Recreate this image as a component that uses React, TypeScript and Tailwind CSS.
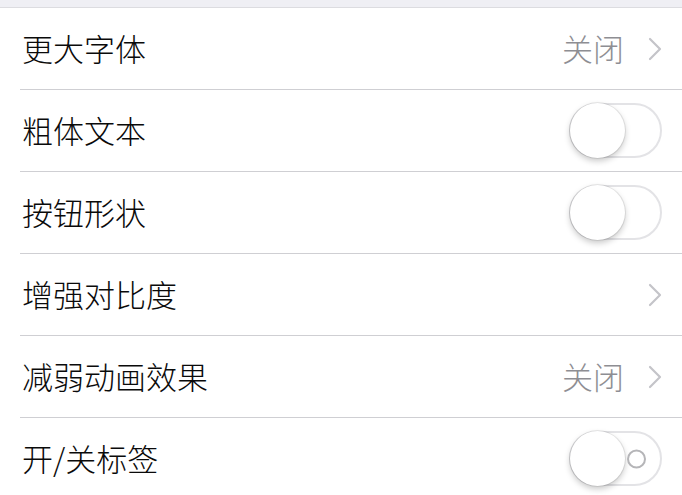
import type { ReactNode } from "react";

type Row = {
  label: string;
  kind: "link" | "toggle";
  value?: string;
  labels?: boolean;
};

const rows: Row[] = [
  { label: "更大字体", kind: "link", value: "关闭" },
  { label: "粗体文本", kind: "toggle" },
  { label: "按钮形状", kind: "toggle" },
  { label: "增强对比度", kind: "link" },
  { label: "减弱动画效果", kind: "link", value: "关闭" },
  { label: "开/关标签", kind: "toggle", labels: true },
];

function Chevron() {
  return (
    <svg viewBox="0 0 14 24" className="h-[24px] w-[14px]" fill="none" stroke="#c4c4c9" strokeWidth="2.2" strokeLinecap="round" strokeLinejoin="round">
      <path d="M2 2l10 10-10 10" />
    </svg>
  );
}

function Toggle({ labels }: { labels?: boolean }) {
  return (
    <div className="relative h-[55px] w-[93px] rounded-full border-2 border-[#e3e3e6] bg-white">
      <div className="absolute -left-[1px] -top-[2px] h-[55px] w-[55px] rounded-full bg-white shadow-[0_3px_6px_rgba(0,0,0,0.22),0_0_0_1px_rgba(0,0,0,0.08)]" />
      {labels ? (
        <div className="absolute right-[14px] top-1/2 h-[19px] w-[19px] -translate-y-1/2 rounded-full border-2 border-[#b5b5b8]" />
      ) : null}
    </div>
  );
}

function SettingRow({ children, label }: { children: ReactNode; label: string }) {
  return (
    <div className="pl-5">
      <div className="flex h-[82px] items-center justify-between border-b border-[#cfcfd3] pr-5">
        <span className="mb-[3px] pl-[2px] text-[31px] font-light leading-none text-[#0a0a0a]">{label}</span>
        {children}
      </div>
    </div>
  );
}

export default function App() {
  return (
    <div
      className="h-[495px] w-[682px] overflow-hidden bg-white"
      style={{ fontFamily: '"Noto Sans CJK SC", "Noto Sans", sans-serif' }}
    >
      <div className="h-[8px] border-b border-[#dcdce0] bg-[#efeff4]" />
      {rows.map((row) => (
        <SettingRow key={row.label} label={row.label}>
          {row.kind === "link" ? (
            <div className="flex items-center gap-[24px]">
              {row.value ? (
                <span className="mb-[3px] text-[31px] font-light leading-none text-[#8e8e93]">{row.value}</span>
              ) : null}
              <Chevron />
            </div>
          ) : (
            <Toggle labels={row.labels} />
          )}
        </SettingRow>
      ))}
    </div>
  );
}
